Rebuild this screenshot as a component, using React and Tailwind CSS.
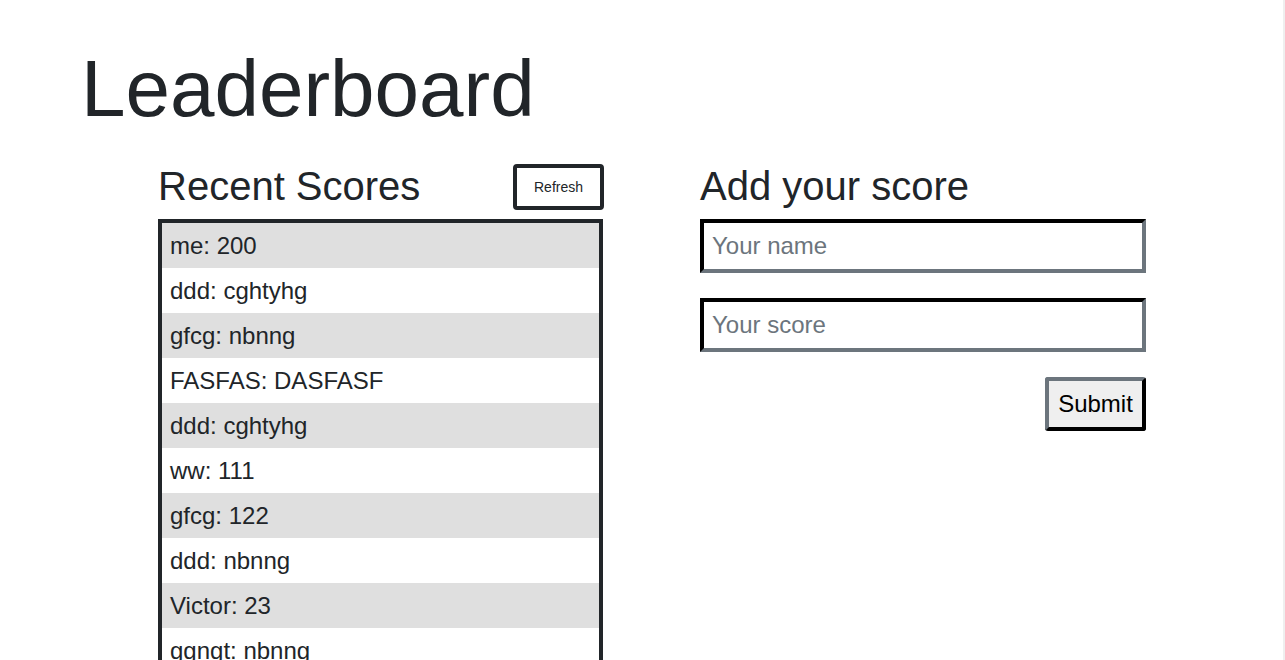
import React from 'react'

const scores = [
  'me: 200',
  'ddd: cghtyhg',
  'gfcg: nbnng',
  'FASFAS: DASFASF',
  'ddd: cghtyhg',
  'ww: 111',
  'gfcg: 122',
  'ddd: nbnng',
  'Victor: 23',
  'ggngt: nbnng',
  'me: 200',
  'ddd: cghtyhg',
]

export default function App() {
  return (
    <div
      className="h-[660px] overflow-hidden bg-white flex text-[#212529]"
      style={{ fontFamily: '"Liberation Sans", Arial, sans-serif' }}
    >
      <div className="flex-1 pt-[41px] pl-[81px]">
        <h1 className="text-[80px] leading-[1.2] font-normal">Leaderboard</h1>

        <div className="flex mt-[25px] ml-[77px] gap-[97px]">
          {/* recent scores */}
          <div className="w-[445px]">
            <div className="flex justify-between items-end h-[48px]">
              <h2 className="text-[40px] leading-[1.2] font-normal">Recent Scores</h2>
              <button className="w-[91px] h-[46px] -mr-px border-4 border-[#212529] rounded-[4px] bg-white text-[14px] text-[#212529]">
                Refresh
              </button>
            </div>
            <ul className="mt-[9px] border-4 border-[#212529]">
              {scores.map((s, i) => (
                <li
                  key={i}
                  className={
                    'px-2 py-2 text-[24px] leading-[29px] ' +
                    (i % 2 === 0 ? 'bg-[#dfdfdf]' : 'bg-white')
                  }
                >
                  {s}
                </li>
              ))}
            </ul>
          </div>

          {/* add score */}
          <div className="w-[446px]">
            <h2 className="h-[48px] text-[40px] leading-[1.2] font-normal">Add your score</h2>
            <input
              placeholder="Your name"
              className="mt-[9px] block w-full h-[54px] px-2 text-[24px] bg-white outline-none border-4 border-t-black border-l-black border-r-[#6c757d] border-b-[#6c757d] placeholder:text-[#6c757d]"
            />
            <input
              placeholder="Your score"
              className="mt-[25px] block w-full h-[54px] px-2 text-[24px] bg-white outline-none border-4 border-t-black border-l-black border-r-[#6c757d] border-b-[#6c757d] placeholder:text-[#6c757d]"
            />
            <div className="flex justify-end mt-[25px]">
              <button className="w-[101px] h-[54px] text-[24px] text-black bg-[#efefef] rounded-[3px] border-4 border-t-[#6c757d] border-l-[#6c757d] border-r-black border-b-black">
                Submit
              </button>
            </div>
          </div>
        </div>
      </div>
      <div className="w-[2px] h-full bg-[#efefef]" />
    </div>
  )
}
